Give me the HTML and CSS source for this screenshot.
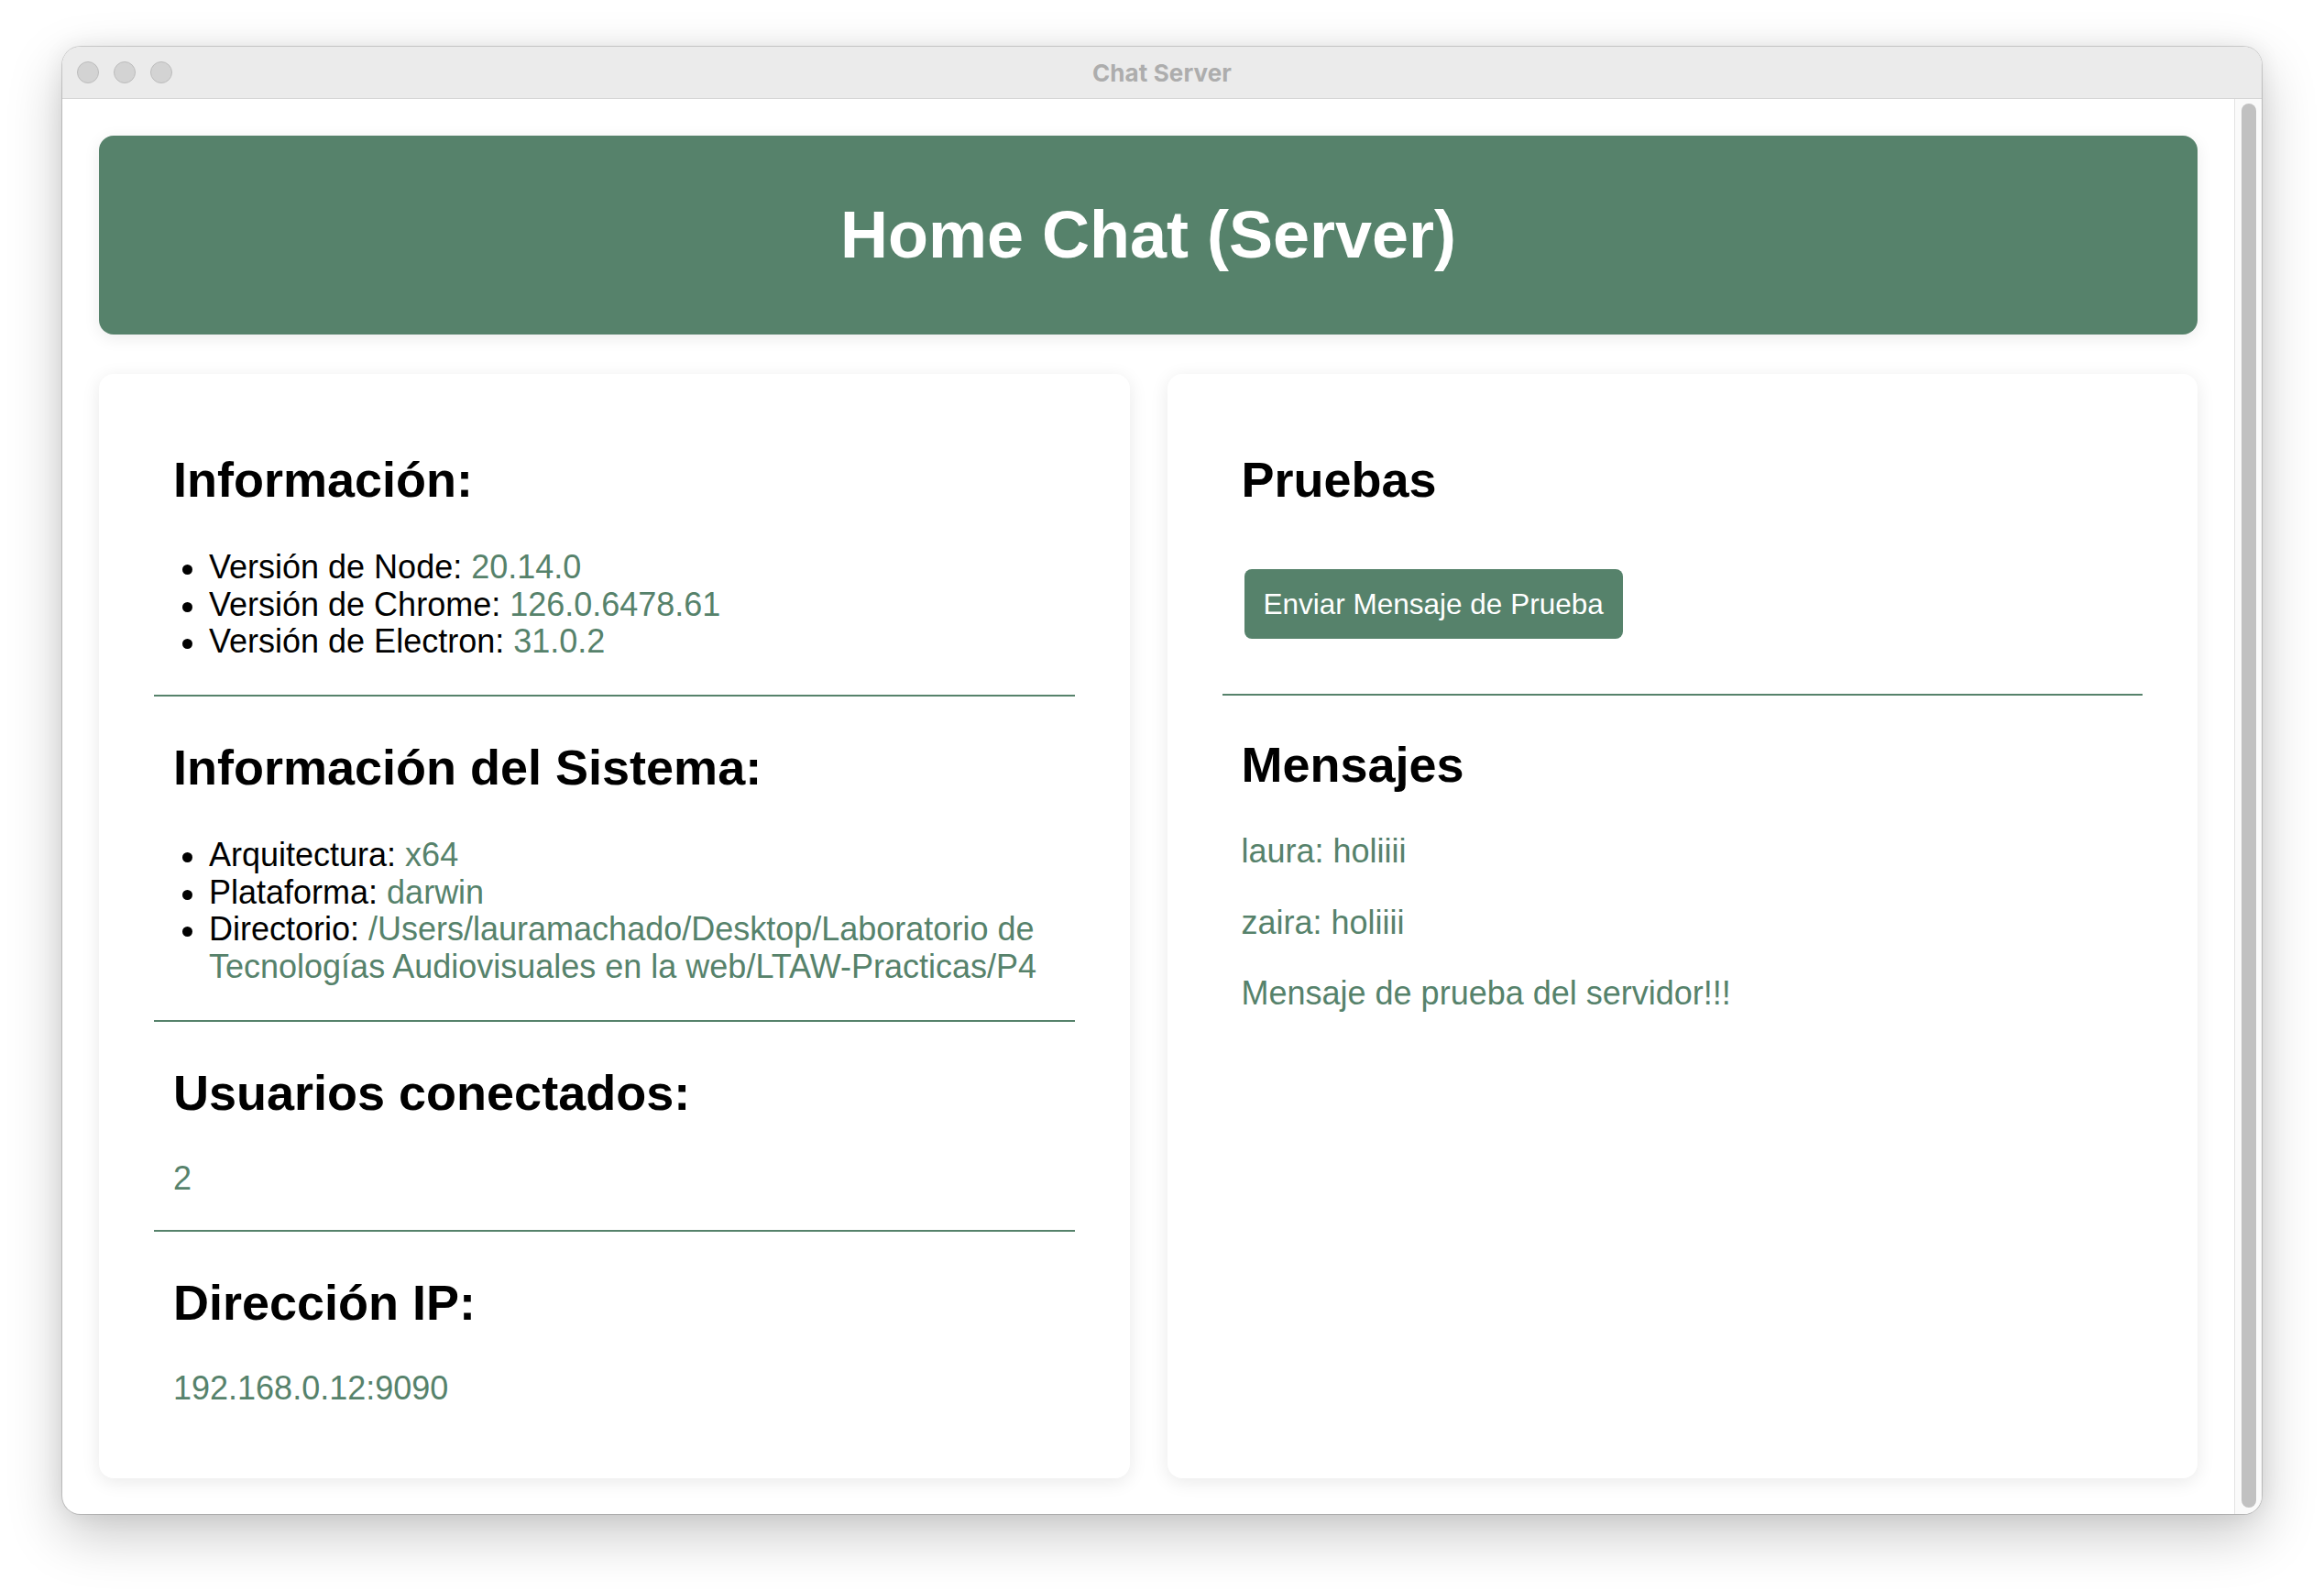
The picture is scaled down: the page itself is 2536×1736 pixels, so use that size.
FILE: index.html
```html
<!DOCTYPE html>
<html lang="es">
<head>
<meta charset="utf-8">
<title>Chat Server</title>
<link rel="stylesheet" href="styles.css">
</head>
<body>
<div class="desktop">
  <div class="window">
    <div class="titlebar">
      <div class="lights">
        <span class="light"></span>
        <span class="light"></span>
        <span class="light"></span>
      </div>
      <div class="title">Chat Server</div>
      <div class="spacer"></div>
    </div>
    <div class="winbody">
      <div class="viewport">
        <header class="banner">
          <h1>Home Chat (Server)</h1>
        </header>
        <main class="grid">
          <section class="card">
            <div class="block">
              <h2>Información:</h2>
              <ul>
                <li>Versión de Node: <span class="val">20.14.0</span></li>
                <li>Versión de Chrome: <span class="val">126.0.6478.61</span></li>
                <li>Versión de Electron: <span class="val">31.0.2</span></li>
              </ul>
            </div>
            <hr>
            <div class="block">
              <h2>Información del Sistema:</h2>
              <ul>
                <li>Arquitectura: <span class="val">x64</span></li>
                <li>Plataforma: <span class="val">darwin</span></li>
                <li>Directorio: <span class="val">/Users/lauramachado/Desktop/Laboratorio de</span><br><span class="val">Tecnologías Audiovisuales en la web/LTAW-Practicas/P4</span></li>
              </ul>
            </div>
            <hr>
            <div class="block short">
              <h2>Usuarios conectados:</h2>
              <p class="val">2</p>
            </div>
            <hr>
            <div class="block short">
              <h2>Dirección IP:</h2>
              <p class="val">192.168.0.12:9090</p>
            </div>
          </section>
          <section class="card">
            <div class="block">
              <h2>Pruebas</h2>
              <div class="actions">
                <button class="btn" type="button">Enviar Mensaje de Prueba</button>
              </div>
            </div>
            <hr>
            <div class="block msgs">
              <h2 class="tight">Mensajes</h2>
              <div class="messages">
                <p class="msg">laura: holiiii</p>
                <p class="msg">zaira: holiiii</p>
                <p class="msg">Mensaje de prueba del servidor!!!</p>
              </div>
            </div>
          </section>
        </main>
      </div>
      <div class="scrollbar"><div class="thumb"></div></div>
    </div>
  </div>
</div>
</body>
</html>
```

FILE: styles.css
```css
html, body {
  margin: 0;
  padding: 0;
  background: #ffffff;
}

body {
  font-family: "Liberation Sans", Arial, Helvetica, sans-serif;
  color: #000;
}

.desktop {
  padding: 51px 0 0 68px;
  width: 2536px;
  height: 1736px;
  box-sizing: border-box;
  overflow: hidden;
}

.window {
  width: 2400px;
  height: 1601px;
  border-radius: 20px;
  overflow: hidden;
  background: #ffffff;
  box-shadow: 0 0 0 1px rgba(0, 0, 0, 0.16),
              0 22px 60px rgba(0, 0, 0, 0.22),
              0 0 24px rgba(0, 0, 0, 0.07);
  display: flex;
  flex-direction: column;
}

.titlebar {
  height: 56px;
  flex: 0 0 auto;
  background: #ebebeb;
  border-bottom: 1px solid #d5d5d5;
  display: grid;
  grid-template-columns: 1fr auto 1fr;
  align-items: center;
}

.lights {
  display: flex;
  gap: 16px;
  padding-left: 16px;
}

.light {
  width: 22px;
  height: 22px;
  border-radius: 50%;
  background: #d3d3d3;
  border: 1px solid #bcbcbc;
}

.title {
  font-family: Inter, "Noto Sans", sans-serif;
  font-weight: 700;
  font-size: 26px;
  color: #adadad;
  letter-spacing: 0.1px;
}

.winbody {
  flex: 1 1 auto;
  display: flex;
  min-height: 0;
}

.viewport {
  flex: 1 1 auto;
  padding: 40px;
  min-width: 0;
}

.scrollbar {
  flex: 0 0 30px;
  box-sizing: border-box;
  background: #fafafa;
  border-left: 1px solid #e4e4e4;
  padding: 5px 6px 7px 7px;
  display: flex;
}

.thumb {
  flex: 1 1 auto;
  background: #c1c1c1;
  border-radius: 8px;
}

.banner {
  background: #56826b;
  border-radius: 16px;
  padding: 67px 0;
  text-align: center;
  box-shadow: 0 4px 18px rgba(0, 0, 0, 0.08);
}

.banner h1 {
  margin: 0;
  color: #ffffff;
  font-size: 72px;
  line-height: 83px;
  font-weight: 700;
}

.grid {
  margin-top: 43px;
  display: grid;
  grid-template-columns: 1fr 1fr;
  gap: 41px;
}

.card {
  background: #ffffff;
  border-radius: 16px;
  padding: 38px 60px 41px;
  box-shadow: 0 4px 20px rgba(0, 0, 0, 0.09);
}

.block {
  padding: 46px 21px 37.5px;
}

.block.short {
  padding-bottom: 36px;
}

.block.msgs {
  padding-top: 44px;
}

.block h2 {
  margin: 0 0 45px;
  font-size: 54px;
  line-height: 62px;
  font-weight: 700;
}

.block.short h2 {
  margin-bottom: 43px;
}

.block h2.tight {
  margin-bottom: 44px;
}

.block ul {
  margin: 0;
  padding-left: 39px;
  list-style: none;
  font-size: 36px;
  line-height: 40.5px;
}

.block li {
  position: relative;
}

.block li::before {
  content: "";
  position: absolute;
  left: -29px;
  top: 17px;
  width: 11px;
  height: 11px;
  border-radius: 50%;
  background: #000;
}

.block p {
  margin: 0;
  font-size: 36px;
  line-height: 40.5px;
}

.val {
  color: #56826b;
}

hr {
  border: 0;
  height: 2px;
  margin: 0;
  background: #56826b;
}

.actions {
  padding: 22px 3px 22.5px;
}

.btn {
  display: inline-block;
  background: #56826b;
  color: #ffffff;
  border: 0;
  border-radius: 8px;
  padding: 20px 21px;
  font-family: "Liberation Sans", Arial, Helvetica, sans-serif;
  font-size: 31.5px;
  line-height: 36px;
  cursor: pointer;
}

.messages .msg {
  color: #56826b;
  margin-bottom: 37px;
}

.messages .msg:last-child {
  margin-bottom: 0;
}
```
